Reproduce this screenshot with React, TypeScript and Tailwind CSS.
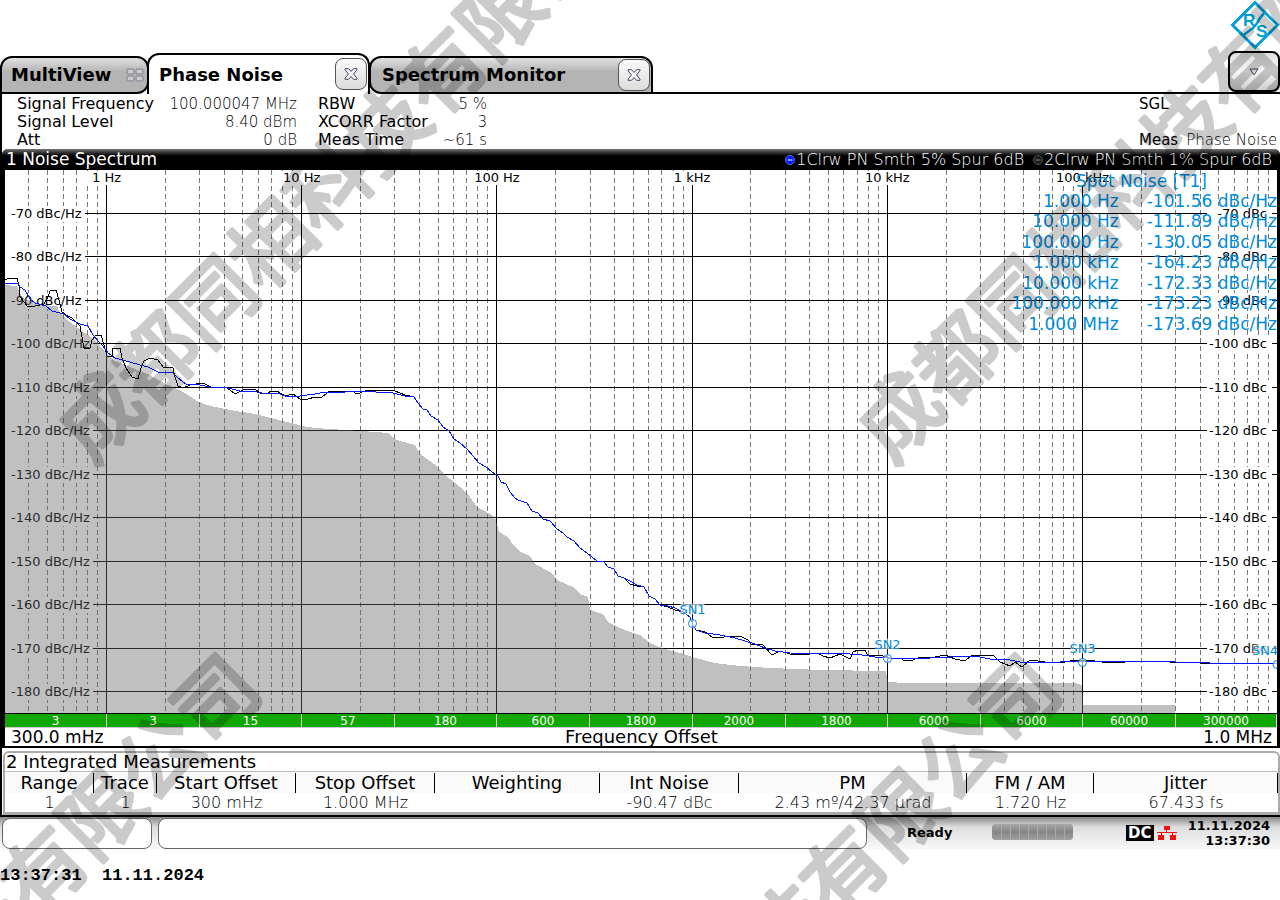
import { Fragment } from "react";

type Point = [number, number];

const DECADE = 195.2;
const ONE_HZ_X = 106.5;
const PLOT = { left: 5, right: 1277, top: 170, bottom: 713 };

const freqToX = (hz: number) => ONE_HZ_X + Math.log10(hz) * DECADE;
const levelToY = (dbc: number) => Math.round(213 + ((-70 - dbc) / 10) * 43.45) + 0.5;
const toPoints = (points: Point[]) => points.map((p) => p.join(",")).join(" ");

const decades = [
  { hz: 1, label: "1 Hz" },
  { hz: 10, label: "10 Hz" },
  { hz: 100, label: "100 Hz" },
  { hz: 1000, label: "1 kHz" },
  { hz: 10000, label: "10 kHz" },
  { hz: 100000, label: "100 kHz" },
];

const levels = [-70, -80, -90, -100, -110, -120, -130, -140, -150, -160, -170, -180];

const minorLines = [0.1, 1, 10, 100, 1000, 10000, 100000].flatMap((base) =>
  [2, 3, 4, 5, 6, 7, 8, 9]
    .map((n) => n * base)
    .filter((hz) => hz > 0.35)
    .map((hz) => Math.round(freqToX(hz) - 0.5) + 0.5),
);

const floorArea: Point[] = [
  [5, 713], [5, 285], [17, 286], [22, 298], [37, 303], [50, 306], [57, 306], [60, 313], [70, 322],
  [78, 328], [85, 333], [95, 340], [105, 352], [115, 361], [130, 367], [150, 375], [160, 381],
  [175, 388], [185, 393], [197, 401], [210, 406], [230, 410], [255, 414], [275, 419], [295, 424],
  [302, 426], [315, 428], [345, 430], [363, 431], [388, 433], [395, 439], [400, 441], [415, 445],
  [420, 454], [430, 461], [438, 467], [445, 475], [460, 487], [470, 497], [477, 507], [485, 511],
  [495, 517], [499, 532], [508, 537], [513, 545], [519, 551], [530, 556], [535, 564], [552, 573],
  [557, 580], [575, 588], [580, 594], [588, 597], [590, 610], [603, 614], [608, 622], [618, 627],
  [630, 632], [640, 635], [650, 643], [662, 648], [680, 653], [692, 657], [715, 663], [740, 666],
  [770, 668], [820, 670], [886, 671], [888, 682], [905, 683], [1075, 683], [1082, 685],
  [1083, 705], [1175, 705], [1175, 713],
];

const slope: Point[] = [
  [414, 397], [418, 403], [423, 409], [427, 410], [431, 416], [438, 420], [443, 427], [449, 431],
  [454, 439], [460, 443], [467, 449], [473, 456], [479, 463], [486, 467], [492, 472], [498, 476],
  [501, 482], [506, 484], [510, 492], [515, 498], [518, 500], [527, 503], [532, 511], [538, 513],
  [543, 519], [550, 521], [557, 529], [563, 533], [567, 537], [574, 541], [580, 548], [587, 553],
  [592, 557], [597, 561], [604, 562], [608, 567], [614, 569], [618, 576], [624, 578],
];

const smoothedTrace: Point[] = [
  [5, 283], [18, 283], [20, 287], [25, 290], [30, 299], [35, 303], [46, 306], [52, 311], [64, 314],
  [70, 319], [80, 324], [88, 326], [93, 335], [98, 341], [103, 346], [108, 353], [115, 358],
  [130, 362], [140, 365], [148, 367], [158, 372], [173, 373], [178, 378], [186, 384], [200, 385],
  [210, 387], [228, 388], [240, 391], [252, 391], [262, 393], [280, 394], [287, 397], [300, 396],
  [315, 394], [320, 393], [345, 392], [358, 391], [376, 392], [393, 393], [405, 396],
  ...slope,
  [630, 581], [637, 585], [644, 587], [649, 596], [655, 599], [660, 605], [668, 606], [675, 608],
  [683, 612], [690, 617], [693, 625], [696, 630], [705, 633], [720, 635], [735, 638], [745, 641],
  [755, 644], [765, 648], [775, 651], [790, 653], [850, 654], [862, 655], [875, 657], [887, 658],
  [930, 658], [950, 657], [975, 656], [990, 659], [1010, 660], [1020, 662], [1050, 663],
  [1070, 661], [1130, 661], [1175, 662], [1210, 663], [1277, 663],
];

const rawTrace: Point[] = [
  [5, 280], [9, 278], [17, 278], [19, 286], [20, 297], [24, 302], [28, 307], [35, 306], [44, 304],
  [48, 297], [50, 291], [56, 290], [59, 300], [62, 312], [66, 315], [72, 318], [80, 326],
  [82, 337], [84, 348], [90, 348], [92, 340], [96, 335], [101, 335], [104, 345], [107, 356],
  [112, 356], [113, 348], [120, 348], [122, 358], [126, 368], [132, 377], [138, 379], [141, 368],
  [144, 361], [150, 358], [158, 360], [163, 367], [173, 368], [175, 377], [178, 386], [183, 388],
  [190, 385], [203, 383], [213, 388], [226, 387], [235, 394], [243, 390], [255, 389], [260, 393],
  [268, 394], [270, 391], [277, 391], [285, 396], [293, 394], [300, 399], [308, 399], [315, 397],
  [322, 397], [330, 391], [352, 391], [357, 394], [365, 391], [385, 390], [395, 391], [405, 395],
  ...slope,
  [630, 584], [637, 586], [644, 587], [649, 596], [655, 599], [660, 605], [668, 607], [675, 610],
  [683, 612], [690, 617], [693, 625], [696, 630], [705, 632], [712, 637], [720, 638], [728, 636],
  [742, 637], [748, 640], [752, 645], [762, 644], [772, 655], [780, 651], [790, 654], [810, 654],
  [817, 653], [823, 656], [830, 658], [840, 654], [850, 659], [853, 652], [858, 650], [865, 650],
  [868, 656], [880, 655], [890, 658], [900, 658], [905, 661], [913, 660], [920, 657], [930, 658],
  [945, 655], [955, 659], [965, 661], [972, 655], [993, 655], [1000, 662], [1010, 666],
  [1015, 662], [1022, 667], [1030, 660], [1045, 662], [1060, 663], [1075, 660], [1095, 661],
  [1110, 663], [1140, 661], [1170, 662], [1200, 663], [1277, 663],
];

const markers = [
  { name: "SN1", x: 692.5, y: 623.5 },
  { name: "SN2", x: 887.5, y: 658.5 },
  { name: "SN3", x: 1082.5, y: 662.5 },
  { name: "SN4", x: 1277, y: 664.5 },
];

const spotNoise = [
  ["1.000 Hz", "-101.56 dBc/Hz"],
  ["10.000 Hz", "-111.89 dBc/Hz"],
  ["100.000 Hz", "-130.05 dBc/Hz"],
  ["1.000 kHz", "-164.23 dBc/Hz"],
  ["10.000 kHz", "-172.33 dBc/Hz"],
  ["100.000 kHz", "-173.23 dBc/Hz"],
  ["1.000 MHz", "-173.69 dBc/Hz"],
];

const segments = [
  "3", "3", "15", "57", "180", "600", "1800", "2000", "1800", "6000", "6000", "60000", "300000",
];

const measurements = [
  { title: "Range", value: "1", width: "w-[89px]" },
  { title: "Trace", value: "1", width: "w-[63px]" },
  { title: "Start Offset", value: "300 mHz", width: "w-[139px]" },
  { title: "Stop Offset", value: "1.000 MHz", width: "w-[139px]" },
  { title: "Weighting", value: "", width: "w-[165px]" },
  { title: "Int Noise", value: "-90.47 dBc", width: "w-[139px]" },
  { title: "PM", value: "2.43 mº/42.37 µrad", width: "w-[228px]" },
  { title: "FM / AM", value: "1.720 Hz", width: "w-[127px]" },
  { title: "Jitter", value: "67.433 fs", width: "" },
];

const watermarks: Point[] = [
  [99, 416],
  [899, 416],
  [-300, 1215],
  [500, 1215],
];

const Logo = () => (
  <svg viewBox="0 0 50 50" className="h-[50px] w-[50px]" aria-hidden="true">
    <g fill="none" stroke="#009fda" strokeWidth="3">
      <path d="M25 2.500 47.500 25 25 47.500 2.500 25Z" />
      <path d="M35 12 Q30 17 26.500 24 Q23 29 19 31 Q15 33.500 13 36" strokeWidth="2.500" />
    </g>
    <g fill="#009fda" className="font-['Liberation_Sans',sans-serif] text-[17px] font-bold">
      <text x="13" y="26">R</text>
      <text x="26" y="37">S</text>
    </g>
  </svg>
);

const CloseButton = ({ name }: { name: string }) => (
  <button
    aria-label={`Close ${name}`}
    className="flex h-8 w-8 items-center justify-center rounded-lg border border-[#555] bg-linear-to-b from-[#fafafa] to-[#dcdcdc]"
  >
    <svg viewBox="0 0 14 12" className="h-3 w-[14px]" fill="#f4f4fa" stroke="#44446a">
      <path d="M1 .7h3.500L7 3.500 9.500 .7H13v1L9.600 6l3.400 4.300v1H9.500L7 8.500 4.500 11.300H1v-1L4.400 6 1 1.700Z" />
    </svg>
  </button>
);

const InfoList = ({ rows, className }: { rows: string[][]; className: string }) => (
  <dl className={`grid grid-cols-[auto_1fr] text-[16px] leading-[18px] ${className}`}>
    {rows.map(([label, value]) => (
      <Fragment key={label}>
        <dt>{label}</dt>
        <dd className="text-right text-[15px] font-extralight">{value}</dd>
      </Fragment>
    ))}
  </dl>
);

const TraceDot = ({ active }: { active?: boolean }) => (
  <svg viewBox="0 0 12 12" className="h-3 w-3" aria-hidden="true">
    <circle cx="6" cy="6" r="4.500" fill={active ? "#0018ff" : "#1c1c1c"} stroke={active ? "#5a6cff" : "#555"} />
    <path d="M3.500 6h5" stroke={active ? "#fff" : "#888"} />
  </svg>
);

const NoisePlot = () => (
  <svg
    viewBox="5 170 1272 543"
    className="block h-auto w-full bg-white text-[13px]"
    role="img"
    aria-label="Phase noise over frequency offset"
  >
    <g shapeRendering="crispEdges">
      {minorLines.map((x) => (
        <path key={x} d={`M${x} ${PLOT.top}V${PLOT.bottom}`} stroke="#777" strokeDasharray="5 3" />
      ))}
      {decades.map(({ hz }) => {
        const x = Math.round(freqToX(hz) - 0.5) + 0.5;
        return (
          <Fragment key={hz}>
            <rect x={x - 24} y="171" width="48" height="14" fill="#fff" />
            <path d={`M${x} 185V${PLOT.bottom}`} stroke="#000" />
          </Fragment>
        );
      })}
      {levels.map((level) => {
        const y = levelToY(level);
        const start = level > -100 ? 85 : 93;
        return (
          <Fragment key={level}>
            <rect x="9" y={y - 8} width={start - 9} height="16" fill="#fff" />
            <rect x="1207" y={y - 8} width="65" height="16" fill="#fff" />
            <path d={`M${start} ${y}H1207M1272 ${y}H${PLOT.right}`} stroke="#000" />
          </Fragment>
        );
      })}
    </g>
    <g className="font-normal">
      {decades.map(({ hz, label }) => (
        <text key={hz} x={freqToX(hz)} y="182" textAnchor="middle">
          {label}
        </text>
      ))}
      {levels.map((level) => (
        <Fragment key={level}>
          <text x="11" y={levelToY(level) + 4}>{`${level} dBc/Hz`}</text>
          <text x="1267" y={levelToY(level) + 4} textAnchor="end">{`${level} dBc`}</text>
        </Fragment>
      ))}
    </g>
    <polygon points={toPoints(floorArea)} fill="#666" fillOpacity="0.41" shapeRendering="crispEdges" />
    <g fill="none" shapeRendering="crispEdges">
      <polyline points={toPoints(rawTrace)} stroke="#000" />
      <polyline points={toPoints(smoothedTrace)} stroke="#0018ff" />
    </g>
    {markers.map(({ name, x, y }) => (
      <g key={name} fill="#008cdc">
        <rect x={Math.min(x, 1265) - 12} y={y - 20} width="24" height="11" fill="#fff" fillOpacity="0.6" />
        <text x={Math.min(x, 1265)} y={y - 10} textAnchor="middle">
          {name}
        </text>
        <circle cx={x} cy={y} r="4" fill="#fff" fillOpacity="0.6" stroke="#008cdc" />
      </g>
    ))}
  </svg>
);

const Watermark = () => (
  <svg className="pointer-events-none absolute inset-0 h-full w-full opacity-20" aria-hidden="true">
    {watermarks.map(([x, y]) => (
      <text
        key={`${x},${y}`}
        x="-40"
        y="30"
        transform={`translate(${x} ${y}) rotate(-45)`}
        stroke="#000"
        strokeWidth="4"
        strokeLinejoin="round"
        className="font-['Noto_Sans_CJK_SC',sans-serif] text-[81px] font-normal"
      >
        成都同相科技有限公司
      </text>
    ))}
  </svg>
);

export default function App() {
  return (
    <div className="relative min-h-screen overflow-hidden bg-white font-['DejaVu_Sans',sans-serif] text-black">
      <header>
        <div className="flex h-[51px] justify-end">
          <Logo />
        </div>
        <nav className="flex h-[43px] items-end">
          <button className="flex h-[38px] w-[149px] items-center justify-between rounded-xl rounded-bl-none border-2 bg-linear-to-b from-[#e2e2e2] to-[#b4b4b4] to-40% pr-[3px] pb-px pl-[9px] text-[18px] font-bold">
            MultiView
            <svg viewBox="0 0 18 14" className="h-[14px] w-[18px]" fill="#ccc" stroke="#9494a4" strokeWidth="1.500">
              <rect x="1" y="1" width="7" height="5" rx="2" />
              <rect x="10" y="1" width="7" height="5" rx="2" />
              <rect x="1" y="8" width="7" height="5" rx="2" />
              <rect x="10" y="8" width="7" height="5" rx="2" />
            </svg>
          </button>
          <div className="-ml-[2px] flex h-[41px] w-[223px] items-center justify-between rounded-t-xl border-2 border-b-0 pr-px pb-px pl-[10px] text-[18px] font-bold">
            <button>Phase Noise</button>
            <CloseButton name="Phase Noise" />
          </div>
          <div className="-ml-px flex h-[38px] w-[284px] items-center justify-between rounded-xl rounded-br-none border-2 bg-linear-to-b from-[#e2e2e2] to-[#b4b4b4] to-40% pr-px pb-px pl-[11px] text-[18px] font-bold">
            <button>Spectrum Monitor</button>
            <CloseButton name="Spectrum Monitor" />
          </div>
          <div className="flex flex-1 items-start justify-end self-stretch border-b-2">
            <button
              aria-label="More channels"
              className="flex h-[41px] w-[52px] items-center justify-center rounded-lg border-2 bg-linear-to-b from-[#e0e0e0] via-[#f6f6f6] to-[#cfcfcf]"
            >
              <svg viewBox="0 0 10 8" className="h-2 w-[10px]" fill="#fff" stroke="#44446a">
                <path d="M1 1h8L5 7Z" />
              </svg>
            </button>
          </div>
        </nav>
      </header>

      <main className="border-l-2">
        <section className="flex h-[55px] pt-px pl-[15px]">
          <InfoList
            className="w-[280px]"
            rows={[
              ["Signal Frequency", "100.000047 MHz"],
              ["Signal Level", "8.40 dBm"],
              ["Att", "0 dB"],
            ]}
          />
          <InfoList
            className="ml-[21px] w-[169px]"
            rows={[
              ["RBW", "5 %"],
              ["XCORR Factor", "3"],
              ["Meas Time", "~61 s"],
            ]}
          />
          <div className="ml-auto flex w-[141px] flex-col text-[15px] leading-[18px]">
            <p>SGL</p>
            <p className="mt-[18px] flex gap-2 whitespace-nowrap">
              Meas <span className="font-extralight">Phase Noise</span>
            </p>
          </div>
        </section>

        <section className="rounded-t-md border-r-[3px] border-b-2 border-l-[3px] border-black bg-white">
          <div className="-mx-[3px] flex h-[21px] items-center justify-between rounded-t-md bg-linear-to-b from-[#777] to-black to-40% pr-2 pl-1 text-white">
            <h2 className="text-[17px]">1 Noise Spectrum</h2>
            <div className="flex items-center text-[16px] font-extralight">
              <TraceDot active />
              <span>1Clrw PN Smth 5% Spur 6dB</span>
              <span className="ml-2">
                <TraceDot />
              </span>
              <span>2Clrw PN Smth 1% Spur 6dB</span>
            </div>
          </div>
          <div className="relative">
            <NoisePlot />
            <table className="absolute top-px right-0 text-right text-[17px] whitespace-nowrap text-[#008cdc]">
              <caption className="h-[20px] pr-[70px] text-right leading-[20px]">
                Spot Noise [T1]
              </caption>
              <tbody>
                {spotNoise.map(([offset, level]) => (
                  <tr key={offset} className="leading-[20px] even:leading-[21px]">
                    <td className="p-0 pr-7">{offset}</td>
                    <td className="p-0">{level}</td>
                  </tr>
                ))}
              </tbody>
            </table>
          </div>
          <div className="grid h-[15px] grid-cols-[102fr_93fr_102fr_93fr_102fr_93fr_103fr_93fr_102fr_93fr_102fr_93fr_101fr] border-t border-b border-t-black border-b-[#ccc] bg-[#10a800] text-center text-[12px] leading-[14px] text-white">
            {segments.map((count, i) => (
              <span key={i} className="min-w-0 border-r border-[#ddd]">
                {count}
              </span>
            ))}
          </div>
          <div className="grid h-[18px] grid-cols-3 pr-[5px] pl-[6px] text-[17px] leading-[18px]">
            <span>300.0 mHz</span>
            <span className="text-center text-[18px]">Frequency Offset</span>
            <span className="text-right">1.0 MHz</span>
          </div>
        </section>

        <section className="mt-[3px] ml-px rounded-t-md border-2 border-b-[3px] border-[#aaa] bg-white">
          <h2 className="h-[18px] pl-px text-[18px] leading-[18px]">2 Integrated Measurements</h2>
          <table className="w-full table-fixed border-t border-[#bbb] text-center">
            <thead>
              <tr className="bg-[#fafafa]">
                {measurements.map(({ title, width }) => (
                  <th key={title} className={`p-0 pt-px text-[18px] leading-[20px] font-normal whitespace-nowrap ${width}`}>
                    <span className="block border-r">{title}</span>
                  </th>
                ))}
              </tr>
            </thead>
            <tbody>
              <tr>
                {measurements.map(({ title, value }) => (
                  <td key={title} className="p-0 text-[16px] leading-[19px] font-extralight whitespace-nowrap">
                    {value}
                  </td>
                ))}
              </tr>
            </tbody>
          </table>
        </section>
      </main>

      <footer>
        <div className="flex h-[35px] items-start border-t-2 bg-linear-to-b from-[#888] via-[#ddd] via-30% to-[#fafafa] pt-px pl-[2px]">
          <div className="h-[31px] w-[150px] rounded-lg border border-[#666] bg-white" />
          <div className="ml-[6px] h-[31px] w-[709px] rounded-lg border border-[#666] bg-white" />
          <span className="ml-10 text-[13px] leading-[30px] font-bold">Ready</span>
          <div className="mt-[6px] ml-10 flex h-4 w-[81px] gap-px overflow-hidden rounded-sm bg-[#aaa]">
            {Array.from({ length: 9 }, (_, i) => (
              <span key={i} className="flex-1 bg-linear-to-b from-[#a8a8a8] via-[#858585] to-[#a0a0a0]" />
            ))}
          </div>
          <div className="mr-[10px] ml-auto flex items-start">
            <span className="mt-[7px] h-4 w-7 bg-black text-center text-[15px] leading-4 font-bold text-white">DC</span>
            <svg viewBox="0 0 20 14" className="mt-2 ml-[3px] h-[14px] w-5" fill="#f01010" aria-hidden="true">
              <path d="M7 0h6v4H7zM1 9h6v5H1zM13 9h6v5h-6zM0 6h20v1H0zM9 4h1v2H9zM4 7h1v2H4zM15 7h1v2h-1z" />
            </svg>
            <p className="ml-[11px] text-right text-[13px] leading-[15px] font-bold">
              11.11.2024
              <br />
              13:37:30
            </p>
          </div>
        </div>
        <p className="mt-4 font-['Liberation_Mono',monospace] text-[17px] leading-5 font-bold whitespace-pre">
          {"13:37:31  11.11.2024"}
        </p>
      </footer>

      <Watermark />
    </div>
  );
}
